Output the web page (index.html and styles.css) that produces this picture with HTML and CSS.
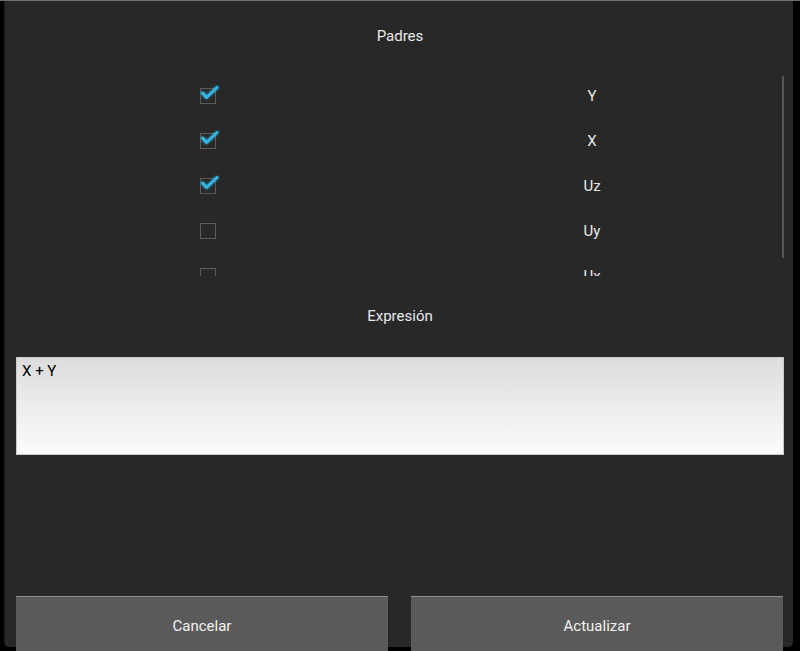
FILE: index.html
```html
<!DOCTYPE html>
<html lang="es">
<head>
<meta charset="utf-8">
<title>Padres</title>
<link rel="stylesheet" href="styles.css">
</head>
<body>
<div class="screen">
  <div class="panel">
    <div class="title title-padres">Padres</div>
    <div class="list">
      <div class="row">
        <div class="cell"><span class="box checked"><svg class="check" viewBox="0 0 16 16"><path d="M2.5 5 L6.5 9.5 L17 -0.5"/></svg></span></div>
        <div class="cell label">Y</div>
      </div>
      <div class="row">
        <div class="cell"><span class="box checked"><svg class="check" viewBox="0 0 16 16"><path d="M2.5 5 L6.5 9.5 L17 -0.5"/></svg></span></div>
        <div class="cell label">X</div>
      </div>
      <div class="row">
        <div class="cell"><span class="box checked"><svg class="check" viewBox="0 0 16 16"><path d="M2.5 5 L6.5 9.5 L17 -0.5"/></svg></span></div>
        <div class="cell label">Uz</div>
      </div>
      <div class="row">
        <div class="cell"><span class="box"></span></div>
        <div class="cell label">Uy</div>
      </div>
      <div class="row">
        <div class="cell"><span class="box"></span></div>
        <div class="cell label">Ux</div>
      </div>
      <div class="scrollbar"></div>
    </div>
    <div class="title title-expr">Expresión</div>
    <div class="field">X + Y</div>
    <div class="buttons">
      <button class="btn">Cancelar</button>
      <button class="btn">Actualizar</button>
    </div>
  </div>
</div>
</body>
</html>
```
FILE: styles.css
```css
html, body {
  margin: 0;
  padding: 0;
  background: #000;
  overflow: hidden;
}
body {
  font-family: Roboto, "Noto Sans", sans-serif;
  width: 800px;
  height: 651px;
  border-top: 1px solid #6e6e6e;
  box-sizing: border-box;
}
.screen {
  height: 650px;
  position: relative;
}
.panel {
  margin-left: 4px;
  width: 789px;
  height: 646px;
  box-sizing: border-box;
  border-left: 1px solid #1c1c1c;
  background: #282828;
  border-radius: 0 0 5px 5px;
  padding: 0 9px 0 11px;
  display: flex;
  flex-direction: column;
}
.panel > * { flex-shrink: 0; }
.title {
  text-align: center;
  color: #e8e8e8;
  font-size: 15px;
  line-height: 20px;
  height: 20px;
}
.title-padres { margin-top: 25px; }
.list {
  margin-top: 27px;
  height: 203px;
  overflow: hidden;
  position: relative;
}
.row {
  display: grid;
  grid-template-columns: 1fr 1fr;
  height: 45px;
  align-items: center;
}
.cell {
  display: flex;
  justify-content: center;
  align-items: center;
}
.label {
  color: #e8e8e8;
  font-size: 15px;
  line-height: 20px;
}
.box {
  width: 16px;
  height: 16px;
  box-sizing: border-box;
  border: 1px solid #5c5c5c;
  position: relative;
  display: block;
}
.check {
  position: absolute;
  left: -1px;
  top: -1px;
  width: 16px;
  height: 16px;
  overflow: visible;
  filter: drop-shadow(0 0 1.5px rgba(51, 181, 229, 0.8));
}
.check path {
  fill: none;
  stroke: #33b5e5;
  stroke-width: 3;
  stroke-linecap: round;
  stroke-linejoin: round;
}
.scrollbar {
  position: absolute;
  right: 0;
  top: 3px;
  width: 2px;
  height: 182px;
  background: #555;
}
.title-expr { margin-top: 30px; }
.field {
  margin-top: 31px;
  height: 98px;
  box-sizing: border-box;
  border: 1px solid #c8c8c8;
  background: linear-gradient(#dcdcdc, #fbfbfb);
  color: #000;
  font-size: 15px;
  line-height: 18px;
  padding: 4px 5px;
  width: 768px;
}
.buttons {
  margin-top: 141px;
  display: grid;
  grid-template-columns: 372px 372px;
  column-gap: 23px;
}
.btn {
  height: 64px;
  border: none;
  border-top: 1px solid #8c8c8c;
  background: #5a5a5a;
  color: #f2f2f2;
  font-family: Roboto, "Noto Sans", sans-serif;
  font-size: 15px;
  padding: 0 0 6px;
  margin: 0;
}
```
